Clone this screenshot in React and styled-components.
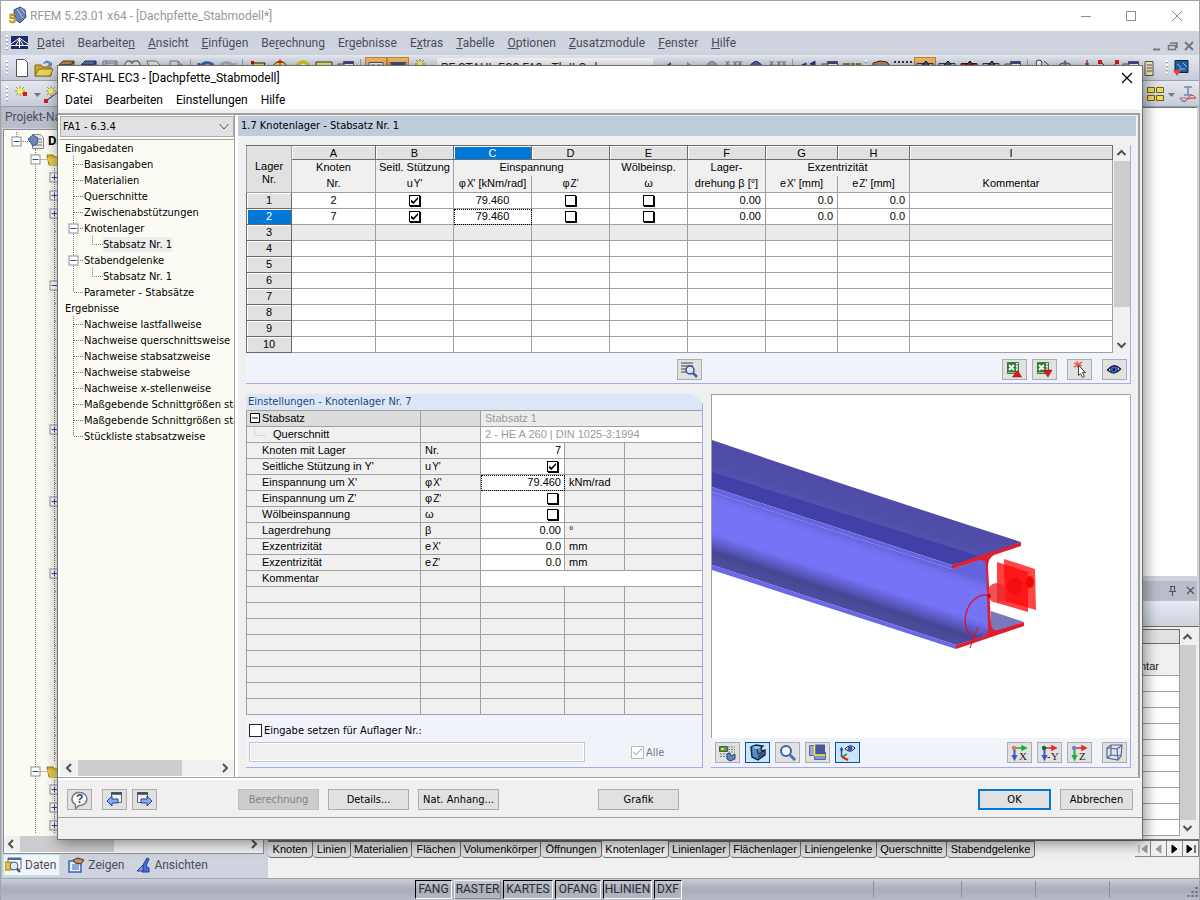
import React from 'react'
import styled, { createGlobalStyle, css } from 'styled-components';

const ui = 'Roboto, "Open Sans", sans-serif';
const dlg = '"DejaVu Sans Condensed", "DejaVu Sans", sans-serif';
const grid = '"Liberation Sans", Arial, sans-serif';

const mainMenu = [
    ['', 'D', 'atei'], ['Bearbeite', 'n', ''], ['', 'A', 'nsicht'], ['', 'E', 'infügen'],
    ['Be', 'r', 'echnung'], ['Er', 'g', 'ebnisse'], ['E', 'x', 'tras'], ['', 'T', 'abelle'],
    ['', 'O', 'ptionen'], ['', 'Z', 'usatzmodule'], ['', 'F', 'enster'], ['', 'H', 'ilfe'],
];

const tree = [
    { text: 'Eingabedaten', level: 0 },
    { text: 'Basisangaben', level: 1 },
    { text: 'Materialien', level: 1 },
    { text: 'Querschnitte', level: 1 },
    { text: 'Zwischenabstützungen', level: 1 },
    { text: 'Knotenlager', level: 1, open: true },
    { text: 'Stabsatz Nr. 1', level: 2, active: true },
    { text: 'Stabendgelenke', level: 1, open: true },
    { text: 'Stabsatz Nr. 1', level: 2 },
    { text: 'Parameter - Stabsätze', level: 1, last: true },
    { text: 'Ergebnisse', level: 0 },
    { text: 'Nachweise lastfallweise', level: 1 },
    { text: 'Nachweise querschnittsweise', level: 1 },
    { text: 'Nachweise stabsatzweise', level: 1 },
    { text: 'Nachweise stabweise', level: 1 },
    { text: 'Nachweise x-stellenweise', level: 1 },
    { text: 'Maßgebende Schnittgrößen sta', level: 1 },
    { text: 'Maßgebende Schnittgrößen sta', level: 1 },
    { text: 'Stückliste stabsatzweise', level: 1, last: true },
];

const columns = ['A', 'B', 'C', 'D', 'E', 'F', 'G', 'H', 'I'];
const supports = [{ nr: 1, node: 2 }, { nr: 2, node: 7 }];

const settings = [
    { name: 'Knoten mit Lager', sym: 'Nr.', value: '7' },
    { name: "Seitliche Stützung in Y'", sym: 'u', sub: "Y'", check: true, on: true },
    { name: "Einspannung um X'", sym: 'φ', sub: "X'", value: '79.460', unit: 'kNm/rad', focus: true },
    { name: "Einspannung um Z'", sym: 'φ', sub: "Z'", check: true },
    { name: 'Wölbeinspannung', sym: 'ω', check: true },
    { name: 'Lagerdrehung', sym: 'β', value: '0.00', unit: '°' },
    { name: 'Exzentrizität', sym: 'e', sub: "X'", value: '0.0', unit: 'mm' },
    { name: 'Exzentrizität', sym: 'e', sub: "Z'", value: '0.0', unit: 'mm' },
];

const sheetTabs = [
    ['Knoten', 45], ['Linien', 38], ['Materialien', 61], ['Flächen', 49], ['Volumenkörper', 80],
    ['Öffnungen', 61], ['Knotenlager', 67], ['Linienlager', 61], ['Flächenlager', 71],
    ['Liniengelenke', 76], ['Querschnitte', 70], ['Stabendgelenke', 88],
];

const snaps = [['FANG', 37], ['RASTER', 47], ['KARTES', 50], ['OFANG', 46], ['HLINIEN', 49], ['DXF', 28]];

// project tree behind the dialog: row index -> node
const projectRows = Array.from({ length: 39 }, (_, i) => {
    if (i === 0) return 'root';
    if (i === 1 || i === 35) return 'folder';
    if ([2, 3, 4, 16, 20, 24, 36, 37, 38].includes(i)) return 'plus';
    if (i === 8) return 'minus';
    return 'leaf';
});

const dots = { stroke: '#777', strokeDasharray: '1 1', fill: 'none' };

function Expander({ x, y, plus }) {
    return (
        <g>
            <rect x={x - 4.5} y={y - 4.5} width="9" height="9" fill="#fff" stroke="#8a8f99"/>
            <path d={`M${x - 3} ${y}h6`} stroke="#2f4b94"/>
            {plus && <path d={`M${x} ${y - 3}v6`} stroke="#2f4b94"/>}
        </g>
    )
}

function TreeGuide({ item }) {
    if (item.level === 0) return null;
    if (item.level === 2) {
        return (
            <svg width="35" height="16">
                <path d="M5.5 0V16M24.5 0V8.5H35" {...dots}/>
            </svg>
        )
    }
    return (
        <svg width="16" height="16">
            <path d={item.last ? 'M5.5 0V8' : 'M5.5 0V16'} {...dots}/>
            <path d="M6 8.5H16" {...dots}/>
            {item.open && <Expander x={5.5} y={8.5}/>}
        </svg>
    )
}

function ProjectRow({ kind, index }) {
    const mid = index > 0;
    return (
        <ProjectLine>
            <svg width="68" height="18">
                {kind === 'root' && <path d="M12.5 0V9.5H28M31.5 15V18" {...dots}/>}
                {mid && <path d="M31.5 0V18" {...dots}/>}
                {kind === 'folder' && <path d="M31.5 9.5H43" {...dots}/>}
                {mid && kind !== 'folder' && <path d="M50.5 0V18M51 9.5H56" {...dots}/>}
                {kind === 'root' && <Expander x={12.5} y={9.5}/>}
                {kind === 'folder' && <Expander x={31.5} y={9.5}/>}
                {(kind === 'plus' || kind === 'minus') && <Expander x={50.5} y={9.5} plus={kind === 'plus'}/>}
                {kind === 'folder' && (
                    <g>
                        <path d="M43 5h6l2 2h12v8H45z" fill="#d8b430" stroke="#9a7a10"/>
                        <path d="M43 8h20l-2 7H46z" fill="#e4c850"/>
                    </g>
                )}
                {kind === 'root' && (
                    <g>
                        <path d="M28.500 2.500h8l3 3v11h-11z" fill="#e8e8ea" stroke="#888"/>
                        <path d="M34 7h4M34 10h4M31 13h7" stroke="#777"/>
                        <path d="M24 7l5-4l5 3l-1 6l-4 2z" fill="#6d87b8" stroke="#3d5580"/>
                    </g>
                )}
            </svg>
            {kind === 'root' && <strong>Da</strong>}
        </ProjectLine>
    )
}

const nums = (fill) => <text x="2" y="8" fontSize="9" fontWeight="700" fontFamily="Liberation Sans, sans-serif" fill={fill}>x.xx</text>;

const shapes = {
    page: <path d="M5.5 1.5h8l3 3v14h-11z" fill="#fff" stroke="#555"/>,
    open: <g><path d="M2 7h6l2 2h8v9H2z" fill="#c9a62c" stroke="#7d6514"/><path d="M2 18l4-7h14l-3 7z" fill="#e8cf62" stroke="#8d7318"/><path d="M10 5q4-5 8 0l1-2v5h-5l2-2q-2-2-5 0z" fill="#5b86b8"/></g>,
    brown: <path d="M4 7l4-4h11l-3 4zM4 7h12v9H4zM16 7l3-4v9l-3 4z" fill="#b9894c" stroke="#5a3c14"/>,
    blue: <path d="M4 7l4-4h11l-3 4zM4 7h12v9H4zM16 7l3-4v9l-3 4z" fill="#5674b4" stroke="#24386a"/>,
    save: <path d="M4 3h14v14H4zM7 3v5h9V3M7 5h8" fill="#c6c9d2" stroke="#777c88"/>,
    print: <path d="M4 6l2-3h4v2h2V3h5l2 3v10H4zM4 8h15" fill="#eee" stroke="#444"/>,
    sheet: <path d="M4 3h9l5 5v9H9z" fill="#eee" stroke="#777"/>,
    doc: <path d="M5 3h8l4 4v10H5zM13 3v4h4" fill="#e4e4e4" stroke="#777"/>,
    undo: <path d="M4 5v6h6M5 10q4-8 12-4q3 3 1 8" fill="none" stroke="#3c67a8" strokeWidth="3"/>,
    redo: <path d="M18 5v6h-6M17 10q-4-8-12-4q-3 3-1 8" fill="none" stroke="#a8b4c6" strokeWidth="3"/>,
    poly: <g><path d="M6 5l12 0l-4 11H5z" fill="#f2e84a" stroke="#222"/><path d="M4 3h3v3H4z" fill="#d00"/></g>,
    circle: <g><circle cx="11" cy="11" r="7.5" fill="#f2e84a" stroke="#333"/><path d="M11 1v6M8 4h6" stroke="#d00"/></g>,
    ring: <circle cx="12" cy="10" r="6" fill="#fff" stroke="#d8cc20" strokeWidth="3.5"/>,
    rect: <g><path d="M3 4h16v12H3z" fill="#f6ee70" stroke="#333"/><path d="M11 10h6M14 7v6" stroke="#222"/></g>,
    wins: <g><path d="M8.500 3.500h10v9h-10z" fill="#fff" stroke="#555"/><path d="M9 5h9" stroke="#3b4c8c" strokeWidth="2"/><path d="M3 6h6v6H3z" fill="#ddd" stroke="#555"/></g>,
    winOn: <path d="M4 4.500h14v12H4zM6 7h4M12 7h4" fill="#fff" stroke="#555"/>,
    tableOn: <g><path d="M3 4.500h16v12H3z" fill="#fff" stroke="#555"/><path d="M4 6h14" stroke="#3b4c8c" strokeWidth="3"/></g>,
    star: <g><path d="M11 1v10M6 6h10M7 2l8 8M15 2l-8 8" stroke="#8e8a10"/><circle cx="11" cy="6" r="2.5" fill="#fff45a"/></g>,
    left: <path d="M14 4v10l-7-5z" fill="#3157a5"/>,
    right: <path d="M8 4v10l7-5z" fill="#7f93bd"/>,
    eye: <g><path d="M2 10q9-11 18 0q-9 9-18 0z" fill="#e8ecf4" stroke="#333"/><circle cx="11" cy="8" r="4.500" fill="#4a6bb8" stroke="#1c2c5a"/></g>,
    eyeGrey: <g><path d="M2 10q9-11 18 0q-9 9-18 0z" fill="#e8ecf4" stroke="#999"/><circle cx="11" cy="8" r="4.500" fill="#98aacb" stroke="#7c88a2"/></g>,
    xxx: nums('#808080'),
    arrows: <path d="M3 8l6-3v3zM13 6l5-3v4z" fill="#223a70" stroke="#223a70"/>,
    misc: <path d="M2 6h6v4M10 6h3v4M15 6h4v4" fill="none" stroke="#8b8140" strokeWidth="2"/>,
    hand: <path d="M3 5l7-2l7 1l3 4l-9 6l-8-2z" fill="#b88a62" stroke="#3d2c20"/>,
    dots: <path d="M2 4h18M2 8h18" stroke="#333" strokeWidth="2" strokeDasharray="2 2"/>,
    frame: <g><path d="M3 5.500h16v9H3z" fill="#9cc4e6" stroke="#223a60"/><path d="M7 8l5-5l3 4l-4 3z" fill="#2a5fa0" stroke="#111"/></g>,
    frameR: <g><path d="M3 5.500h16v9H3z" fill="#d03020" stroke="#401010"/><path d="M7 8l5-5l3 4l-4 3z" fill="#803030" stroke="#111"/></g>,
    nodes: <path d="M4 5a3 3 0 1 0 6 0a3 3 0 1 0 -6 0M12 3l8 7" fill="#fff" stroke="#444"/>,
    sweep: <path d="M3 9q8-9 16 0zM11 2v8" fill="#a9bcd8" stroke="#3a4c78"/>,
    cross: <path d="M5 8h5v-3M12 5v3h5M11 2v9" fill="none" stroke="#884450" strokeWidth="1.500"/>,
    check: <g><path d="M4 5l8 8l6-8" fill="none" stroke="#333"/><path d="M0 2h4v4H0zM17 2h4v4h-4z" fill="#e01818"/></g>,
    book: <path d="M3 3.500h8v14H3zM5 7h5M5 10h5M5 13h5" fill="#f0e4b0" stroke="#555"/>,
    bluebox: <g><path d="M4 2.500h13v12H4z" fill="#1e5a9c" stroke="#123"/><path d="M6 6l4 3M12 5l4 4M8 11h6" stroke="#8fc4ff"/><path d="M2 12h8l-4 6z" fill="#e84040"/></g>,
    starNode: <g><path d="M9 2v10M4 7h10M5 3l8 8M13 3l-8 8" stroke="#a8a020"/><circle cx="9" cy="7" r="2.500" fill="#fff45a"/><path d="M12 8h4v4h-4z" fill="#e01818"/></g>,
    starLine: <g><path d="M3 17L19 5" stroke="#222"/><path d="M8 2v10M3 7h10M4 3l8 8M12 3l-8 8" stroke="#a8a020"/><circle cx="8" cy="7" r="2.500" fill="#fff45a"/><path d="M1 15h4v4H1z" fill="#e01818"/></g>,
    blocks: <path d="M2.500 3.500h7v5h-7zM11.500 3.500h7v5h-7zM2.500 11.500h7v5h-7zM11.500 11.500h7v5h-7z" fill="#f0dc5c" stroke="#6e6010"/>,
    section: <g><path d="M7 3h8M11 3v8M7 11h8" stroke="#7484b0" strokeWidth="1.500"/><path d="M3 14q4 7 8 0" stroke="#4848d8" fill="none"/><path d="M10 15q5-7 9-1z" stroke="#d84848" fill="none"/><path d="M3 14h16" stroke="#e06060"/></g>,
};

const bar1 = [
    'page', 'open', 'brown', 'blue', 'save', 'print', 'sheet', 'doc', '|', 'undo', 'redo', '|',
    'poly', 'circle', 'ring', 'rect', 'wins', '|', '*winOn', '*tableOn', 'star', 'combo',
    'left', 'right', 'eyeGrey', 'xxx', 'eye', 'xxx', '|', 'arrows', 'wins', 'misc', ':',
    'hand', 'dots', '*frame', 'frame', 'frameR', 'frame', 'wins', '|',
    'nodes', 'sweep', 'cross', 'check', 'wins', 'book', ':', 'bluebox',
];

function ToolIcon({ name }) {
    const on = name[0] === '*';
    const key = on ? name.slice(1) : name;
    return (
        <ToolButton type="button" aria-label={key} $on={on}>
            <svg width="22" height="20">{shapes[key]}</svg>
        </ToolButton>
    )
}

function Caret() {
    return <svg width="10" height="20"><path d="M1 9h7l-3.500 4z" fill="#777"/></svg>
}

const chevrons = { left: 'M9 4L5 8l4 4', right: 'M5 4l4 4-4 4', up: 'M3.500 10L7.500 6l4 4', down: 'M3.500 6l4 4 4-4' };

function Chevron({ dir }) {
    return (
        <ScrollButton type="button" aria-label={dir}>
            <svg width="15" height="16"><path d={chevrons[dir]} fill="none" stroke="#505050" strokeWidth="2"/></svg>
        </ScrollButton>
    )
}

const excel = (
    <g>
        <path d="M4.500 2.500h11v11h-11z" fill="#f4faf4" stroke="#3e7a44"/>
        <path d="M4 2.500h9v10H4z" fill="#2f7d3a"/>
        <path d="M6 5l5 5M11 5l-5 5" stroke="#fff" strokeWidth="2"/>
        <path d="M12 5h3M12 8h3" stroke="#3e7a44"/>
    </g>
);

const axes = (label, h, v, origin) => (
    <g>
        <path d="M6 5h10M14 3l4 2l-4 2z" fill={h} stroke={h} strokeWidth="1.500"/>
        <path d="M6.500 6v8M5 13h3l-1.500 3z" fill={v} stroke={v} strokeWidth="2"/>
        <circle cx="6" cy="5" r="2.200" fill={origin}/>
        <text x={label.length > 1 ? 9 : 11} y="17" fontSize="11" fontFamily="Liberation Serif, serif" fill="#222">{label}</text>
    </g>
);

const glyphs = {
    find: <g><path d="M3 3h12M3 6h12M3 9h5M3 12h5" stroke="#777" strokeWidth="1.500"/><circle cx="12" cy="10" r="4" fill="#dce8fa" stroke="#33508f" strokeWidth="1.500"/><path d="M15 13l4 4" stroke="#4460a8" strokeWidth="2.500"/></g>,
    excelUp: <g>{excel}<path d="M14.500 10l4 7h-9z" fill="#e01a1a" stroke="#7a0c0c" strokeWidth=".5"/></g>,
    excelDown: <g>{excel}<path d="M10 10h9l-4 7z" fill="#e01a1a" stroke="#7a0c0c" strokeWidth=".5"/></g>,
    pick: <g><path d="M6 3l8 3M6 7l8-5M9 1l1 7" stroke="#e86060" strokeWidth="1.500"/><path d="M10.500 5.500v10l2-2l2 4l2-1l-2-4h3z" fill="#fff" stroke="#444"/></g>,
    eye: <g><path d="M4.500 10q7-8 13-1q-6 7-13 1z" fill="#fff" stroke="#222" strokeWidth="1.500"/><circle cx="11" cy="9.500" r="3.500" fill="#3b63d8" stroke="#152a6a"/><circle cx="11" cy="9.500" r="1.200" fill="#000"/></g>,
    render: <g><path d="M3.500 3.500h8v5h-8z" fill="#3da845" stroke="#555"/><path d="M5 5h3v2H5z" fill="#e8d838"/><path d="M12 4h7M12 6.500h7M12 9h7M4 11h7M4 13.500h7" stroke="#777" strokeDasharray="2 1"/><path d="M11 11l3-1l1 3l4-2v5l-5 2l-3-2z" fill="#5d86bd" stroke="#26446e"/></g>,
    solid: <g><path d="M5 4l5-2l7 1l-2 2l1 3l3-1v5l-7 5l-6-3z" fill="#5e8abe" stroke="#14243c" strokeWidth="1.400"/><path d="M6 4l4-1l5 1l-4 2z" fill="#b4cce4"/><path d="M11 6l1 5l6-3" fill="none" stroke="#14243c"/><path d="M12 12l6-3v3l-6 4z" fill="#2e5488"/></g>,
    zoom: <g><circle cx="10" cy="8" r="5" fill="#f0f5fc" stroke="#46609c" strokeWidth="2"/><path d="M14 12l5 5" stroke="#5570b0" strokeWidth="3"/></g>,
    layers: <g><path d="M3.500 2.500h8v10h-8z" fill="#98a6dc" stroke="#5966a4"/><path d="M8.500 9.500h11v7h-11z" fill="#8496d0" stroke="#5966a4"/><path d="M9 1.500h10v10H9z" fill="#4456a0"/><path d="M8.500 2v10H19" fill="none" stroke="#f4ec30" strokeWidth="1.500"/></g>,
    axisEye: <g><path d="M9 6q5-6 10-1q-4 6-10 1z" fill="#fff" stroke="#222"/><circle cx="14" cy="5.500" r="2.500" fill="#3556a8"/><path d="M5.500 5v9" stroke="#2050c0" strokeWidth="1.500"/><path d="M3.500 7.500l2-4l2 4z" fill="#2050c0"/><path d="M6 14l5-3" stroke="#28a038" strokeWidth="2"/><path d="M6 14l6 3" stroke="#e02020" strokeWidth="2"/></g>,
    viewX: axes('X', '#18b038', '#3858c8', '#f07070'),
    viewY: axes('-Y', '#e02838', '#3858c8', '#107020'),
    viewZ: axes('Z', '#e02838', '#18b038', '#7080e0'),
    cube: <g fill="#dce4f4" stroke="#5a6888" strokeWidth="1.200"><path d="M4 5l4-3h11l-1 11l-3 4L4 15z"/><path d="M4 5l10 1l1 11M14 6l5-4M8 2v10l10 1M8 12l-4 3" fill="none"/></g>,
    help: <g><path d="M12 2.500a7 6.500 0 0 1 0 13l-1 0l-3.500 3v-4a7 6.500 0 0 1 4.500-12z" fill="#fafafa" stroke="#777" strokeWidth="1.400"/><text x="8" y="13" fontSize="12" fontWeight="700" fontFamily="Liberation Sans, sans-serif" fill="#344878">?</text></g>,
    prev: <g><path d="M8.500 2.500h10v10h-10z" fill="#f2f2f2" stroke="#666"/><path d="M8 3.500h11" stroke="#444a60" strokeWidth="2.500"/><path d="M4 11l5-5v3h6v4H9v3z" fill="#86a8f0" stroke="#26439a"/></g>,
    next: <g><path d="M4.500 2.500h10v10h-10z" fill="#f2f2f2" stroke="#666"/><path d="M4 3.500h11" stroke="#444a60" strokeWidth="2.500"/><path d="M19 11l-5-5v3H8v4h6v3z" fill="#86a8f0" stroke="#26439a"/></g>,
};

function Glyph({ name, on }) {
    return (
        <IconButton type="button" aria-label={name} $on={on}>
            <svg width="23" height="19">{glyphs[name]}</svg>
        </IconButton>
    )
}

function Symbol({ sym, sub }) {
    return <span>{sym}{sub && <Sub>{sub}</Sub>}</span>
}

function Beam() {
    return (
        <svg width="100%" height="343" role="img" aria-label="Knotenlager 3D">
            <defs>
                <linearGradient id="top" gradientUnits="userSpaceOnUse" x1="120" y1="78" x2="108" y2="116">
                    <stop offset="0" stopColor="#5250b4"/>
                    <stop offset=".2" stopColor="#4e4ca6"/>
                    <stop offset=".7" stopColor="#504ea8"/>
                    <stop offset="1" stopColor="#5856b8"/>
                </linearGradient>
                <linearGradient id="web" gradientUnits="userSpaceOnUse" x1="120" y1="135" x2="95" y2="211">
                    <stop offset="0" stopColor="#6462dc"/>
                    <stop offset=".08" stopColor="#7270ee"/>
                    <stop offset=".15" stopColor="#7674f6"/>
                    <stop offset=".5" stopColor="#7674f6"/>
                    <stop offset=".62" stopColor="#5e5cc8"/>
                    <stop offset=".72" stopColor="#484694"/>
                    <stop offset=".88" stopColor="#4e4c9e"/>
                </linearGradient>
            </defs>
            <path d="M0 45Q150 96 309 147L270 163L0 79z" fill="url(#top)"/>
            <path d="M0 77L270 162L240 170L0 92z" fill="#4240a6"/>
            <path d="M0 97L240 174L270 164Q275 164 275 172L278 235Q275 241 268 243L244 250L0 170z" fill="url(#web)"/>
            <path d="M0 92L240 170V174L0 97z" fill="#6664e4"/>
            <path d="M0 170L244 250V254L0 175z" fill="#6a68e8"/>
            <path d="M279 216L312 227L285 236Q279 237 279 230z" fill="#7a78bc"/>
            <path d="M240 170L309 147V151L282 160Q276 163 276 172L279 228Q280 237 286 235L312 227V231L244 254V250L270 242Q276 240 276 233L274 171Q274 164 268 165L240 174z" fill="#dc2034"/>
            <path d="M285 167L316 177V217L285 208z" fill="#ff1010" opacity=".8"/>
            <path d="M292 164L323 174L324 215L293 206z" fill="#ff0808" opacity=".75"/>
            <ellipse cx="318" cy="187" rx="4" ry="6" fill="#f00808"/>
            <circle cx="303" cy="191" r="8" fill="#e80c0c" opacity=".6"/>
            <circle cx="285" cy="198" r="10" fill="#e82830" opacity=".8"/>
            <path d="M277 200C262 198 254 212 253 225C253 234 258 241 264 242" fill="none" stroke="#e01020" strokeWidth="1.300"/>
            <path d="M266 232L258 253" stroke="#e01020"/>
            <circle cx="277" cy="201" r="2" fill="#c00010"/>
        </svg>
    )
}

function MainWindow() {
    return (
        <Window>
            <TitleBar>
                <svg width="20" height="20" viewBox="0 0 20 20">
                    <path d="M6 4l6-3l5 3l1 7l-6 6l-5-4z" fill="#6282b4" stroke="#2d4570"/>
                    <path d="M9 3l6 9M13 2l4 6" stroke="#b8cbe6"/>
                    <text x="1" y="17" fontSize="13" fontWeight="700" fontFamily="Liberation Sans" fill="#f0c020" stroke="#6a5000" strokeWidth=".4">5</text>
                </svg>
                <span>RFEM 5.23.01 x64 - [Dachpfette_Stabmodell*]</span>
                <svg className="sys" width="104" height="12" stroke="#8a8a8a" fill="none">
                    <path d="M1 6.500h10M46.500 1.500h9v9h-9zM92 1l10 10M102 1L92 11"/>
                </svg>
            </TitleBar>
            <MenuBar>
                <Grip/>
                <svg width="18" height="14">
                    <path d="M0 0h17v13H0z" fill="#1c2c6c"/>
                    <path d="M0 9.500h17M8.500 2v10M0 8l8.500-6L17 8M5 9l3.500-6L12 9" fill="none" stroke="#fff"/>
                </svg>
                <MenuItems>
                    {mainMenu.map(([a, key, b]) => (
                        <button type="button" key={a + key + b}>{a}<u>{key}</u>{b}</button>
                    ))}
                </MenuItems>
                <svg className="sys" width="44" height="12" stroke="#777" fill="none">
                    <path d="M1 9.500h7" strokeWidth="2"/>
                    <path d="M16.500 5.500h7v4h-7zM18 3h7v5" strokeWidth="1.500"/>
                    <path d="M33 2l8 8M41 2l-8 8" strokeWidth="2"/>
                </svg>
            </MenuBar>
            <ToolBar>
                <Grip/>
                {bar1.map((name, i) => {
                    if (name === '|') return <Divider key={i}/>;
                    if (name === ':') return <Grip key={i}/>;
                    if (name === 'combo') {
                        return <CaseSelect key={i} aria-label="Lastfall"><option>RF-STAHL EC3 FA3 - Th.II.Ord.</option></CaseSelect>
                    }
                    return <ToolIcon key={i} name={name}/>
                })}
            </ToolBar>
            <ToolBar>
                <Grip/>
                <ToolIcon name="starNode"/>
                <Caret/>
                <ToolIcon name="starLine"/>
                <Spring/>
                <ToolIcon name="blocks"/>
                <Caret/>
                <ToolIcon name="section"/>
            </ToolBar>
            <Body>
                <Dock>
                    <DockTitle>Projekt-Navigator</DockTitle>
                    <ProjectTree>
                        {projectRows.map((kind, i) => <ProjectRow key={i} kind={kind} index={i}/>)}
                        <Spring/>
                        <HScroll $thumb={94}><Chevron dir="left"/><i/><Spring/><Chevron dir="right"/></HScroll>
                    </ProjectTree>
                    <DockTabs>
                        <DockTab type="button" $on>
                            <svg width="17" height="16"><path d="M3 1h13v11H3z" fill="#fff" stroke="#4468b0"/><path d="M3 2h13" stroke="#4468b0" strokeWidth="2"/><path d="M0 5h7v8H0z" fill="#e8c43c" stroke="#9a7c14"/><circle cx="9" cy="9" r="4" fill="#dceafa" stroke="#44587c"/><path d="M12 12l3 3" stroke="#5a4030" strokeWidth="2"/></svg>
                            Daten
                        </DockTab>
                        <DockTab type="button">
                            <svg width="17" height="16"><path d="M1 4h12v11H1z" fill="#e6effc" stroke="#3862b4" strokeWidth="1.500"/><path d="M4 8h7M4 10h7M4 12h7" stroke="#3862b4"/><path d="M5 3l5-2l6 2l-3 4l-6-1z" fill="#bb9068" stroke="#4c3624"/></svg>
                            Zeigen
                        </DockTab>
                        <DockTab type="button">
                            <svg width="15" height="16"><path d="M7 8L11 1l2 1l-3 7l3 2v4H6z" fill="#4a6ed0" stroke="#243e90"/><path d="M1 14l6-6v6z" fill="#8ca4e4" stroke="#243e90"/></svg>
                            Ansichten
                        </DockTab>
                    </DockTabs>
                </Dock>
                <Workspace>
                    <ModelView/>
                    <PaneTitle>
                        <svg width="30" height="12" stroke="#555" fill="none"><path d="M3 1.500h5M4 1v5M7.500 1v5M2 6.500h7M5.500 7v4M20 2l7 7M27 2l-7 7" strokeWidth="1.200"/></svg>
                    </PaneTitle>
                    <PaneTools/>
                    <SheetArea>
                        <Sheet>
                            <thead>
                                <tr><th className="letter" aria-label="Spalte I"/></tr>
                                <tr><th>Kommentar</th></tr>
                            </thead>
                            <tbody>
                                {Array.from({ length: 10 }, (_, i) => <tr key={i}><td/></tr>)}
                            </tbody>
                        </Sheet>
                        <VScroll><Chevron dir="up"/><i/><Chevron dir="down"/></VScroll>
                    </SheetArea>
                    <SheetTabs>
                        {sheetTabs.map(([name, w]) => (
                            <SheetTab type="button" key={name} $w={w} $on={name === 'Knotenlager'}>{name}</SheetTab>
                        ))}
                        <Spring/>
                        {['M4 4v8M12 4v8L7 8z', 'M10 4v8L5 8z', 'M5 4v8l5-4z', 'M4 4v8l5-4zM12 4v8'].map((d, i) => (
                            <NavButton type="button" key={d} aria-label={'Blatt ' + (i + 1)}>
                                <svg width="14" height="15"><path d={d} fill={i < 2 ? '#999' : '#000'} stroke={i < 2 ? '#999' : '#000'}/></svg>
                            </NavButton>
                        ))}
                    </SheetTabs>
                    <Below/>
                </Workspace>
            </Body>
            <StatusBar>
                {snaps.map(([name, w]) => (
                    <Snap type="button" key={name} $w={w} $up={name === 'RASTER'}>{name}</Snap>
                ))}
                <Spring/>
                <Field $w={88}/><Field $w={74}/><Field $w={74}/>
                <Field $w={92}>
                    <svg width="12" height="12"><path d="M9.500 1v10M5.500 5v6M1.500 9v2" stroke="#666a74" strokeWidth="2" strokeDasharray="2 2"/></svg>
                </Field>
            </StatusBar>
        </Window>
    )
}

function SupportTable() {
    return (
        <Grid>
            <colgroup>
                <col style={{ width: 46 }}/>
                {[84, 78, 78, 78, 78, 78, 72, 72].map((w, i) => <col key={i} style={{ width: w }}/>)}
                <col/>
            </colgroup>
            <thead>
                <tr className="letters">
                    <Corner rowSpan="3">Lager<br/>Nr.</Corner>
                    {columns.map(c => <Letter key={c} $on={c === 'C'}>{c}</Letter>)}
                </tr>
                <tr className="upper">
                    <th>Knoten</th>
                    <th>Seitl. Stützung</th>
                    <th colSpan="2">Einspannung</th>
                    <th>Wölbeinsp.</th>
                    <th>Lager-</th>
                    <th colSpan="2">Exzentrizität</th>
                    <th/>
                </tr>
                <tr className="lower">
                    <th>Nr.</th>
                    <th><Symbol sym="u" sub="Y'"/></th>
                    <th><Symbol sym="φ" sub="X'"/> [kNm/rad]</th>
                    <th><Symbol sym="φ" sub="Z'"/></th>
                    <th>ω</th>
                    <th>drehung β [°]</th>
                    <th><Symbol sym="e" sub="X'"/> [mm]</th>
                    <th><Symbol sym="e" sub="Z'"/> [mm]</th>
                    <th>Kommentar</th>
                </tr>
            </thead>
            <tbody>
                {supports.map(s => (
                    <tr key={s.nr}>
                        <RowHead $on={s.nr === 2}>{s.nr}</RowHead>
                        <Cell>{s.node}</Cell>
                        <Cell><Tick type="checkbox" defaultChecked aria-label={'uY ' + s.nr}/></Cell>
                        <Cell $focus={s.nr === 2}>79.460</Cell>
                        <Cell><Tick type="checkbox" aria-label={'phiZ ' + s.nr}/></Cell>
                        <Cell><Tick type="checkbox" aria-label={'omega ' + s.nr}/></Cell>
                        <Cell $num>0.00</Cell>
                        <Cell $num>0.0</Cell>
                        <Cell $num>0.0</Cell>
                        <Cell/>
                    </tr>
                ))}
                {[3, 4, 5, 6, 7, 8, 9, 10].map(nr => (
                    <tr key={nr}>
                        <RowHead>{nr}</RowHead>
                        {columns.map(c => <Cell key={c} $grey={nr === 3}/>)}
                    </tr>
                ))}
            </tbody>
        </Grid>
    )
}

function SettingsTable() {
    return (
        <Props>
            <colgroup>
                {[175, 60, 84, 60].map((w, i) => <col key={i} style={{ width: w }}/>)}
                <col/>
            </colgroup>
            <tbody>
                <tr>
                    <PropCell $tone="#dcdcdc" $lead>
                        <svg width="15" height="12"><path d="M.5 1.500h9v9h-9z" fill="#fff" stroke="#000"/><path d="M2 6h6" stroke="#000"/></svg>
                        Stabsatz
                    </PropCell>
                    <PropCell $tone="#dcdcdc"/>
                    <PropCell $tone="#ebebeb" $dim colSpan="3">Stabsatz 1</PropCell>
                </tr>
                <tr>
                    <PropCell $indent>
                        <svg width="22" height="12"><path d="M.5 0v7.500h11" fill="none" stroke="#d4d4d4"/></svg>
                        Querschnitt
                    </PropCell>
                    <PropCell/>
                    <PropCell $tone="#fff" $dim colSpan="3">2 - HE A 260 | DIN 1025-3:1994</PropCell>
                </tr>
                {settings.map((s, i) => (
                    <tr key={i}>
                        <PropCell $name>{s.name}</PropCell>
                        <PropCell><Symbol sym={s.sym} sub={s.sub}/></PropCell>
                        <PropCell $tone="#fff" $num $focus={s.focus}>
                            {s.check ? <Tick type="checkbox" defaultChecked={s.on} aria-label={s.name}/> : s.value}
                        </PropCell>
                        <PropCell>{s.unit}</PropCell>
                        <PropCell/>
                    </tr>
                ))}
                <tr>
                    <PropCell $name>Kommentar</PropCell>
                    <PropCell/>
                    <PropCell $tone="#fff" colSpan="3"/>
                </tr>
                {[0, 1, 2, 3, 4, 5, 6, 7].map(i => (
                    <tr key={i}>
                        <PropCell/><PropCell/><PropCell/><PropCell/><PropCell/>
                    </tr>
                ))}
            </tbody>
        </Props>
    )
}

function SteelDialog() {
    return (
        <Dialog role="dialog" aria-label="RF-STAHL EC3">
            <DialogTitle>
                RF-STAHL EC3 - [Dachpfette_Stabmodell]
                <CloseButton type="button" aria-label="Schließen">
                    <svg width="12" height="12"><path d="M1 1l10 10M11 1L1 11" stroke="#000" strokeWidth="1.200"/></svg>
                </CloseButton>
            </DialogTitle>
            <DialogMenu>
                {['Datei', 'Bearbeiten', 'Einstellungen', 'Hilfe'].map(m => <button type="button" key={m}>{m}</button>)}
            </DialogMenu>
            <Content>
                <Side>
                    <SelectWrap>
                        <CasePick aria-label="Bemessungsfall"><option>FA1 - 6.3.4</option></CasePick>
                        <svg width="12" height="8"><path d="M1.500 1l4.500 5l4.500-5" fill="none" stroke="#555"/></svg>
                    </SelectWrap>
                    <Tree>
                        {tree.map((item, i) => (
                            <TreeRow key={i} $level={item.level}>
                                <TreeGuide item={item}/>
                                <TreeLabel $on={item.active}>{item.text}</TreeLabel>
                            </TreeRow>
                        ))}
                        <Spring/>
                        <HScroll $thumb={104} $inset><Chevron dir="left"/><i/><Spring/><Chevron dir="right"/></HScroll>
                    </Tree>
                </Side>
                <Main>
                    <MaskTitle>1.7 Knotenlager - Stabsatz Nr. 1</MaskTitle>
                    <Panels>
                        <TopPanel>
                            <GridWrap>
                                <SupportTable/>
                                <VScroll $thumb={146}><Chevron dir="up"/><i/><Spring/><Chevron dir="down"/></VScroll>
                            </GridWrap>
                            <TopTools>
                                <Spring/>
                                <Glyph name="find"/>
                                <Spring/>
                                <Glyph name="excelUp"/>
                                <Glyph name="excelDown"/>
                                <Gap/>
                                <Glyph name="pick"/>
                                <Gap/>
                                <Glyph name="eye"/>
                            </TopTools>
                        </TopPanel>
                        <LowerPanels>
                            <SettingsPanel>
                                <PanelTitle>Einstellungen - Knotenlager Nr. 7</PanelTitle>
                                <SettingsTable/>
                                <SetFor>
                                    <label><Box type="checkbox"/>Eingabe setzen für Auflager Nr.:</label>
                                    <div>
                                        <NrInput type="text" aria-label="Auflager Nr." disabled/>
                                        <label><Box type="checkbox" defaultChecked disabled/>Alle</label>
                                    </div>
                                </SetFor>
                            </SettingsPanel>
                            <ViewPanel>
                                <Viewport><Beam/></Viewport>
                                <ViewTools>
                                    <Glyph name="render"/>
                                    <Glyph name="solid" on/>
                                    <Glyph name="zoom"/>
                                    <Glyph name="layers"/>
                                    <Glyph name="axisEye" on/>
                                    <Spring/>
                                    <Glyph name="viewX"/>
                                    <Glyph name="viewY"/>
                                    <Glyph name="viewZ"/>
                                    <Gap/>
                                    <Glyph name="cube"/>
                                </ViewTools>
                            </ViewPanel>
                        </LowerPanels>
                    </Panels>
                </Main>
            </Content>
            <Footer>
                <Group $w={171}>
                    <Glyph name="help"/><Gap/><Glyph name="prev"/><Glyph name="next"/>
                </Group>
                <Group $gap={9}>
                    <Push type="button" disabled>Berechnung</Push>
                    <Push type="button">Details...</Push>
                    <Push type="button">Nat. Anhang...</Push>
                </Group>
                <Group $indent={99}><Push type="button">Grafik</Push></Group>
                <Spring/>
                <Group $gap={9}>
                    <Push type="button" $main $w={73}>OK</Push>
                    <Push type="button" $w={73}>Abbrechen</Push>
                </Group>
            </Footer>
            <DialogStatus/>
        </Dialog>
    )
}

function App() {
    return (
        <>
            <GlobalStyle/>
            <MainWindow/>
            <SteelDialog/>
        </>
    )
}

export default App

const GlobalStyle = createGlobalStyle`
    * {
        box-sizing: border-box;
    }

    body {
        margin: 0;
        overflow: hidden;
        background: #f0f0f0;
    }

    button, input, select {
        font: inherit;
        color: inherit;
        margin: 0;
        padding: 0;
        border: 0;
        background: none;
        border-radius: 0;
    }

    svg {
        display: block;
        flex-shrink: 0;
    }
`
const Window = styled.div`
    display: flex;
    flex-direction: column;
    min-height: 100vh;
    border: 1px solid #a4a4a4;
    border-bottom: 0;
    background: #cfd3dd;
    font-family: ${ui};
    font-size: 12px;
    color: #4a4e5a;
`
const TitleBar = styled.header`
    display: flex;
    align-items: center;
    height: 30px;
    padding: 0 15px 0 7px;
    gap: 2px;
    background: #fff;
    color: #999;

    .sys {
        margin-left: auto;
    }
`
const MenuBar = styled.nav`
    display: flex;
    align-items: center;
    height: 24px;
    padding: 0 3px;

    .sys {
        margin-left: auto;
        margin-top: 6px;
    }
`
const MenuItems = styled.div`
    display: flex;
    gap: 13px;
    margin-left: 8px;
    line-height: 16px;
`
const Grip = styled.span`
    width: 2px;
    height: 16px;
    margin: 0 3px 0 2px;
    flex-shrink: 0;
    background: repeating-linear-gradient(#fff 0 2px, #9a9eaa 2px 3px, transparent 3px 4px);
`
const ToolBar = styled.div`
    display: flex;
    align-items: center;
    height: 26px;
    padding-left: 3px;
    overflow: hidden;
    background: linear-gradient(#e4e8f1, #c6cbd8);
    border-bottom: 1px solid #9ba0ad;
`
const ToolButton = styled.button`
    width: 22px;
    height: 22px;
    flex-shrink: 0;
    ${p => p.$on && css`
        background: #f6b765;
        box-shadow: inset 0 0 0 1px #c08840;
    `}
`
const Divider = styled.span`
    width: 1px;
    height: 18px;
    margin: 0 4px 0 3px;
    background: #9da2ae;
    flex-shrink: 0;
`
const CaseSelect = styled.select`
    appearance: none;
    width: 216px;
    height: 20px;
    margin: 0 4px 0 6px;
    padding-left: 4px;
    background: #f8f8f8;
    color: #222;
    flex-shrink: 0;
`
const Spring = styled.span`
    flex: 1;
`
// doubles the flex gap of its row
const Gap = styled.span`
    width: 0;
`
const Body = styled.div`
    display: flex;
    flex: 1;
`
const Dock = styled.aside`
    display: flex;
    flex-direction: column;
    width: 263px;
    margin-right: 4px;
    border-left: 1px solid #b4b8c4;
`
const DockTitle = styled.div`
    height: 21px;
    padding-left: 3px;
    line-height: 21px;
    background: #b8bdc9;
`
const ProjectTree = styled.div`
    display: flex;
    flex-direction: column;
    flex: 1;
    margin: 1px 0 0 1px;
    padding: 2px 0 1px;
    border: 1px solid #8b8f9b;
    background: #fbfbf3;
`
const ProjectLine = styled.div`
    display: flex;
    height: 18px;
    line-height: 18px;
    overflow: hidden;
    font-size: 13px;
    color: #000;

    strong {
        margin-left: -24px;
    }
`
const HScroll = styled.div`
    display: flex;
    height: 16px;
    padding-left: ${p => p.$inset ? 2 : 0}px;
    background: #f0f0f0;

    i {
        width: ${p => p.$thumb}px;
        background: #cdcdcd;
    }
`
const VScroll = styled.div`
    display: flex;
    flex-direction: column;
    width: 16px;
    background: #f0f0f0;

    i {
        background: #cdcdcd;
        ${p => p.$thumb ? css`height: ${p.$thumb}px;` : css`flex: 1;`}
    }
`
const ScrollButton = styled.button`
    width: 16px;
    height: 16px;
    flex-shrink: 0;
`
const DockTabs = styled.div`
    display: flex;
    height: 24px;
    padding: 1px 0 0 2px;
`
const DockTab = styled.button`
    display: flex;
    align-items: center;
    gap: 3px;
    height: 20px;
    padding: 0 3px 0 1px;
    margin-right: 8px;
    ${p => p.$on && css`
        background: #f4f5f8;
        box-shadow: 0 0 0 1px #b4e8ee;
    `}
`
const Workspace = styled.main`
    display: flex;
    flex-direction: column;
    flex: 1;
    min-width: 0;
`
const ModelView = styled.div`
    flex: 1;
    margin-right: 2px;
    border-top: 1px solid #77797f;
    background: #fff;
`
const PaneTitle = styled.div`
    display: flex;
    align-items: center;
    justify-content: flex-end;
    height: 20px;
    margin: 5px 2px 0 0;
    background: #b9bdc9;
`
const PaneTools = styled.div`
    height: 25px;
    background: linear-gradient(#e6eaf2, #cdd2dd);
`
const SheetArea = styled.div`
    display: flex;
    height: 215px;
    padding: 2px 3px 3px 0;
    background: #f0f0f0;
    border: 1px solid #6c6c6c;
    border-width: 1px 0 2px;
`
const Sheet = styled.table`
    flex: 1;
    border-spacing: 0;
    table-layout: fixed;
    font-family: ${grid};
    font-size: 11px;
    color: #222;
    background: #fff;
    padding-left: 814px;

    th {
        padding: 12px 0 0;
        height: 32px;
        font-weight: 400;
        background: #f0f0f0;
        border: 1px solid #a0a0a0;
        border-width: 0 1px 1px 0;
    }

    .letter {
        height: 15px;
        padding: 0;
        background: #e1e1e1;
        border: 1px solid #6c6c6c;
    }

    td {
        height: 16px;
        padding: 0;
        border: 1px solid #a0a0a0;
        border-width: 0 1px 1px 0;
    }
`
const SheetTabs = styled.div`
    display: flex;
    height: 17px;
    background: #f0f0f0;
`
const SheetTab = styled.button`
    width: ${p => p.$w}px;
    height: 17px;
    flex-shrink: 0;
    font-family: ${grid};
    font-size: 11px;
    line-height: 15px;
    white-space: nowrap;
    color: #000;
    background: ${p => p.$on ? '#f0f0f0' : '#dedede'};
    border: 1px solid #6c6c6c;
    border-width: ${p => p.$on ? '0 1px 1px 0' : '1px 1px 1px 0'};
    border-radius: 0 0 4px 4px;
`
const NavButton = styled.button`
    width: 16px;
    height: 16px;
    flex-shrink: 0;
    background: #f0f0f0;
    border: 1px solid #888;
    border-width: 0 1px 1px 0;
`
const Below = styled.div`
    height: 20px;
    background: #f0f0f0;
`
const StatusBar = styled.footer`
    display: flex;
    align-items: center;
    height: 22px;
    padding-left: 414px;
    gap: 2px;
    border-top: 1px solid #a0a4ae;
    background: linear-gradient(#c9cedb, #a9aeb8 45%, #a9aeb8 60%, #b8bcc6);
`
const Snap = styled.button`
    width: ${p => p.$w}px;
    height: 19px;
    border: 1px solid;
    border-color: ${p => p.$up ? '#eee #888 #888 #eee' : '#000 #fff #fff #000'};
    line-height: 15px;
    white-space: nowrap;
    color: #2a2c34;
`
const Field = styled.span`
    display: flex;
    justify-content: flex-end;
    align-items: flex-end;
    width: ${p => p.$w - 2}px;
    height: 17px;
    border-left: 1px solid #8c909a;
`
const Dialog = styled.section`
    position: absolute;
    top: 65px;
    left: 57px;
    right: 57px;
    border: 1px solid #6e6e6e;
    background: #f0f0f0;
    box-shadow: 2px 3px 14px rgba(0, 0, 0, 0.45);
    font-family: ${dlg};
    font-size: 11px;
    color: #000;
`
const DialogTitle = styled.header`
    display: flex;
    align-items: center;
    justify-content: space-between;
    height: 24px;
    padding: 0 9px 0 3px;
    background: #fff;
    font-family: ${ui};
    font-size: 12px;
`
const CloseButton = styled.button`
    width: 12px;
    height: 12px;
`
const DialogMenu = styled.nav`
    display: flex;
    gap: 13px;
    height: 19px;
    margin-bottom: 4px;
    padding: 2px 0 0 7px;
    background: #fff;
    font-family: ${ui};
    font-size: 12px;
    line-height: 17px;
`
const Content = styled.div`
    display: flex;
    border: 2px solid #a0a0a0;
    border-width: 2px 2px 1px 0;
    margin-right: 2px;
`
const Side = styled.div`
    display: flex;
    flex-direction: column;
    width: 177px;
    padding: 1px 0 1px 2px;
    border-right: 1px solid #a0a0a0;
    background: #fff;
`
const SelectWrap = styled.div`
    display: flex;
    align-items: center;
    height: 21px;
    margin-bottom: 2px;
    padding-right: 3px;
    background: #e1e1e1;
    border: 1px solid #acacac;
`
const CasePick = styled.select`
    appearance: none;
    flex: 1;
    padding-left: 2px;
    line-height: 19px;
`
const Tree = styled.div`
    display: flex;
    flex-direction: column;
    flex: 1;
    border-top: 1px solid #a0a0a0;
    background: #fbfbf3;
`
const TreeRow = styled.div`
    display: flex;
    align-items: center;
    height: 16px;
    padding-left: ${p => p.$level ? 8 : 5}px;
    overflow: hidden;
    white-space: nowrap;
`
const TreeLabel = styled.span`
    line-height: 15px;
    background: ${p => p.$on ? '#ededed' : 'none'};
`
const Main = styled.div`
    flex: 1;
    min-width: 0;
    padding: 1px 2px 9px 0;
    border-left: 3px solid #fff;
`
const MaskTitle = styled.h1`
    margin: 0;
    height: 20px;
    padding-left: 3px;
    line-height: 20px;
    font-size: 11px;
    font-weight: 400;
    background: #bfcddb;
`
const Panels = styled.div`
    display: flex;
    flex-direction: column;
    gap: 10px;
    padding: 9px 5px 0 8px;
`
const TopPanel = styled.div`
    border-right: 1px solid #a8a8ec;
`
const GridWrap = styled.div`
    display: flex;
    justify-content: space-between;
    gap: 1px;
`
const Grid = styled.table`
    flex: 1;
    min-width: 0;
    border-spacing: 0;
    table-layout: fixed;
    border-top: 1px solid #6b6b6b;
    font-family: ${grid};
    font-size: 11px;
    line-height: 13px;
    white-space: nowrap;

    th {
        padding: 0;
        font-weight: 400;
        text-align: center;
        background: #f0f0f0;
        border-right: 1px solid #a0a0a0;
    }

    .letters {
        height: 14px;
    }

    .upper {
        height: 16px;
    }

    .upper th, .lower th {
        padding-top: 1px;
        vertical-align: top;
    }

    .lower th {
        height: 17px;
        border-bottom: 1px solid #a0a0a0;
    }
`
const Corner = styled.th`
    && {
        padding-top: 8px;
        background: #e1e1e1;
        border: 1px solid #a0a0a0;
        border-width: 0 1px 1px;
    }
`
const Letter = styled.th`
    && {
        height: 14px;
        line-height: 12px;
        color: ${p => p.$on ? '#fff' : '#000'};
        background: ${p => p.$on ? '#0078d7' : '#e1e1e1'};
        border: 1px solid #6b6b6b;
        border-width: 0 1px 1px 0;
        box-shadow: inset 1px 1px 0 #fff;
    }
`
const RowHead = styled.th`
    && {
        height: 16px;
        color: ${p => p.$on ? '#fff' : '#000'};
        background: ${p => p.$on ? '#0078d7' : '#e1e1e1'};
        border: 1px solid #6b6b6b;
        border-width: 0 1px 1px 1px;
        box-shadow: inset 1px 1px 0 #fff;
    }
`
const Cell = styled.td`
    height: 16px;
    padding: 0 ${p => p.$num ? 4 : 0}px 0 0;
    text-align: ${p => p.$num ? 'right' : 'center'};
    background: ${p => p.$grey ? '#ebebeb' : '#fff'};
    border: 1px solid #a0a0a0;
    border-width: 0 1px 1px 0;
    ${p => p.$focus && css`
        outline: 1px dotted #000;
        outline-offset: -1px;
    `}
`
const Sub = styled.span`
    font-size: 10px;
    margin-left: 1px;
`
const Tick = styled.input`
    appearance: none;
    display: block;
    width: 11px;
    height: 11px;
    margin: 0 auto;
    border: 1px solid #000;
    background: #fff;
    box-shadow: 1px 1px 0 #000;

    &:checked::before {
        content: '';
        display: block;
        width: 7px;
        height: 7px;
        margin: 1px;
        background: #000;
        clip-path: polygon(0 40%, 35% 65%, 100% 0, 100% 30%, 35% 100%, 0 75%);
    }
`
const TopTools = styled.div`
    display: flex;
    align-items: center;
    gap: 5px;
    height: 31px;
    padding: 2px 3px 0 135px;
    background: #f0f4fa;
    border-bottom: 1px solid #a8a8ec;
`
const IconButton = styled.button`
    width: 25px;
    height: 21px;
    flex-shrink: 0;
    border: 1px solid ${p => p.$on ? '#00559b' : '#adadad'};
    background: ${p => p.$on ? '#cce4f7' : '#e1e1e1'};
`
const LowerPanels = styled.div`
    display: flex;
    gap: 8px;
`
const SettingsPanel = styled.div`
    display: flex;
    flex-direction: column;
    width: 457px;
    flex-shrink: 0;
    border: 1px solid #a8a8ec;
    border-width: 0 1px 1px 0;
    background: #f0f4fa;
    clip-path: polygon(0 0, 447px 0, 100% 10px, 100% 100%, 0 100%);
`
const PanelTitle = styled.h2`
    margin: 0;
    height: 16px;
    padding-left: 2px;
    line-height: 16px;
    font-size: 11px;
    font-weight: 400;
    color: #1a4a7c;
    background: #dce6f4;
`
const Props = styled.table`
    width: 100%;
    border-spacing: 0;
    table-layout: fixed;
    border-top: 1px solid #a0a0a0;
    font-family: ${grid};
    font-size: 11px;
    line-height: 13px;
    white-space: nowrap;

    td:first-child {
        border-left: 1px solid #a0a0a0;
    }

    td:last-child {
        border-right: 0;
    }
`
const PropCell = styled.td`
    height: 16px;
    padding: 0 3px 0 ${p => p.$indent ? 7 : p.$name ? 15 : p.$lead ? 3 : 4}px;
    text-align: ${p => p.$num ? 'right' : 'left'};
    color: ${p => p.$dim ? '#999' : '#000'};
    background: ${p => p.$tone || '#f0f0f0'};
    border: 1px solid #a0a0a0;
    border-width: 0 1px 1px 0;

    svg {
        display: inline-block;
        vertical-align: top;
        margin-right: -3px;
    }

    ${Tick} {
        margin: 0 3px 0 auto;
    }

    ${p => p.$focus && css`
        outline: 1px dotted #000;
        outline-offset: -1px;
    `}
`
const SetFor = styled.div`
    display: flex;
    flex-direction: column;
    gap: 5px;
    padding: 8px 3px 5px;

    label {
        display: flex;
        align-items: center;
        gap: 2px;
        height: 14px;
    }

    > div {
        display: flex;
        align-items: center;
        gap: 46px;
        height: 20px;
        color: #777;
    }
`
const Box = styled.input`
    appearance: none;
    width: 13px;
    height: 13px;
    border: 1px solid #222;
    background: #fff;

    &:disabled {
        border-color: #bbb;
    }

    &:checked::before {
        content: '';
        display: block;
        width: 9px;
        height: 8px;
        margin: 1px;
        background: #aaa;
        clip-path: polygon(0 45%, 35% 80%, 100% 0, 100% 20%, 35% 100%, 0 65%);
    }
`
const NrInput = styled.input`
    width: 336px;
    height: 20px;
    border: 1px solid #c4c8cc;
    background: #f0f0f0;
    box-shadow: inset 0 0 0 1px #fff;
`
const ViewPanel = styled.div`
    display: flex;
    flex-direction: column;
    flex: 1;
    min-width: 0;
    border: 1px solid #a8a8ec;
    border-width: 0 1px 1px 0;
`
const Viewport = styled.div`
    flex: 1;
    border: 1px solid #a0a0a0;
    border-width: 1px 0 0 1px;
    background: #fff;
`
const ViewTools = styled.div`
    display: flex;
    align-items: center;
    gap: 5px;
    height: 29px;
    padding: 0 3px 0 4px;
    background: #f0f4fa;
`
const Footer = styled.footer`
    display: flex;
    align-items: center;
    height: 39px;
    padding: 2px 9px 0;
    border-top: 2px solid #fff;
`
const Group = styled.div`
    display: flex;
    gap: ${p => p.$gap || 5}px;
    width: ${p => p.$w ? p.$w + 'px' : 'auto'};
    margin-left: ${p => p.$indent || 0}px;
`
const Push = styled.button`
    width: ${p => p.$w || 81}px;
    height: 21px;
    white-space: nowrap;
    background: #e1e1e1;
    border: ${p => p.$main ? '2px solid #0078d7' : '1px solid #adadad'};

    &:disabled {
        color: #838383;
        background: #cccccc;
        border-color: #bfbfbf;
    }
`
const DialogStatus = styled.div`
    height: 22px;
    border-top: 1px solid #a0a0a0;
`
